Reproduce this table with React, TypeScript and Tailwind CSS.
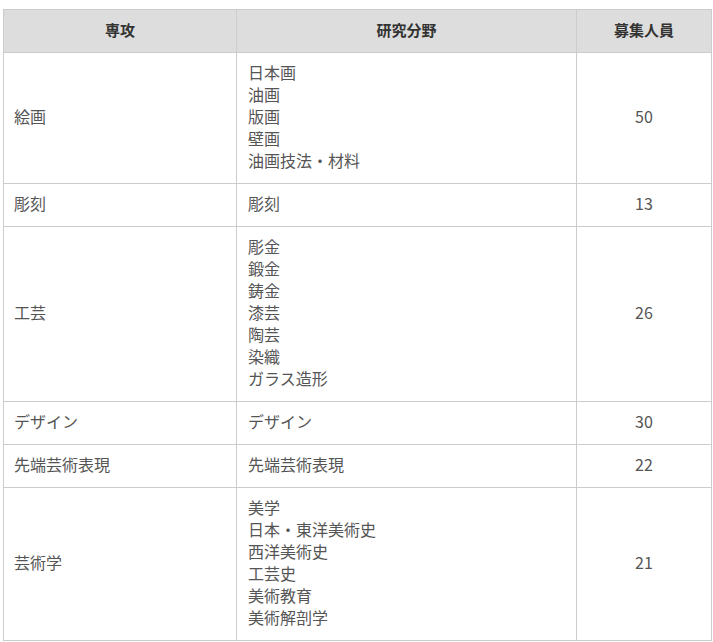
const rows: { major: string; fields: string[]; count: number }[] = [
  { major: "絵画", fields: ["日本画", "油画", "版画", "壁画", "油画技法・材料"], count: 50 },
  { major: "彫刻", fields: ["彫刻"], count: 13 },
  { major: "工芸", fields: ["彫金", "鍛金", "鋳金", "漆芸", "陶芸", "染織", "ガラス造形"], count: 26 },
  { major: "デザイン", fields: ["デザイン"], count: 30 },
  { major: "先端芸術表現", fields: ["先端芸術表現"], count: 22 },
  { major: "芸術学", fields: ["美学", "日本・東洋美術史", "西洋美術史", "工芸史", "美術教育", "美術解剖学"], count: 21 },
];

export default function App() {
  return (
    <div
      className="bg-white w-[713px] h-[642px] overflow-hidden pt-[9px] pl-[3px]"
      style={{ fontFamily: '"Noto Sans CJK JP", "Noto Sans", sans-serif' }}
    >
      <table className="table-fixed border-collapse w-[708px] text-[16px] leading-[22px]">
        <colgroup>
          <col className="w-[233px]" />
          <col className="w-[340px]" />
          <col className="w-[135px]" />
        </colgroup>
        <thead>
          <tr className="bg-[#dddddd] text-[#333333]">
            <th className="border border-[#cccccc] pt-[9px] pb-[11px] px-[10px] font-bold text-[15px] text-center">専攻</th>
            <th className="border border-[#cccccc] pt-[9px] pb-[11px] px-[10px] font-bold text-[15px] text-center">研究分野</th>
            <th className="border border-[#cccccc] pt-[9px] pb-[11px] px-[10px] font-bold text-[15px] text-center">募集人員</th>
          </tr>
        </thead>
        <tbody className="text-[#555555]">
          {rows.map((r) => (
            <tr key={r.major}>
              <td className="border border-[#cccccc] pt-[8px] pb-[12px] px-[10px] align-middle">{r.major}</td>
              <td className="border border-[#cccccc] pt-[8px] pb-[12px] px-[11px] align-middle">
                {r.fields.map((f) => (
                  <div key={f}>{f}</div>
                ))}
              </td>
              <td className="border border-[#cccccc] pt-[8px] pb-[12px] px-[10px] text-center align-middle">{r.count}</td>
            </tr>
          ))}
        </tbody>
      </table>
    </div>
  );
}
